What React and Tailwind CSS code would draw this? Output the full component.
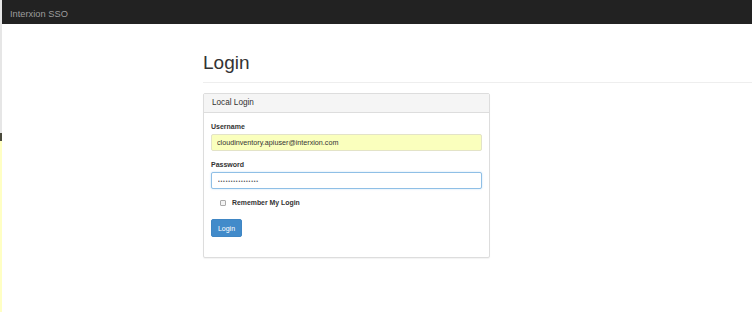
import React from 'react';

const font = { fontFamily: '"Liberation Sans", Arial, sans-serif' };

export default function App() {
  return (
    <div className="flex w-[752px] h-[312px] overflow-hidden bg-white text-[#333]" style={font}>
      {/* left edge artifact strip */}
      <div className="flex flex-col w-[2px] shrink-0">
        <div className="h-[133px] bg-[#e6e6e6]"></div>
        <div className="h-[8px] bg-[#4a4a3c]"></div>
        <div className="flex-1 bg-[#ffffc4]"></div>
      </div>

      <div className="flex flex-col flex-1 min-w-0">
        <nav className="h-[24px] bg-[#222] pl-[8px]">
          <span className="text-[9.3px] leading-[22px] text-[#9d9d9d]">Interxion SSO</span>
        </nav>

        <div className="ml-[201px]">
          <h1 className="mt-[28px] text-[19px] leading-[22px] font-normal text-[#333]">Login</h1>
          <div className="mt-[8px] h-px bg-[#eee]"></div>

          <div className="mt-[10px] w-[287px] border border-[#ddd] rounded-[2px] bg-white shadow-[0_1px_1px_rgba(0,0,0,0.05)]">
            <div className="h-[19px] bg-[#f5f5f5] border-b border-[#ddd] pl-[8px] text-[8.2px] leading-[18px] text-[#333]">
              Local Login
            </div>

            <form className="px-[7px] pt-[9px] pb-[20px]">
              <label className="block text-[7px] leading-[10px] font-bold">Username</label>
              <input
                type="text"
                readOnly
                value="cloudinventory.apiuser@interxion.com"
                className="mt-[2px] block w-full h-[17px] px-[5px] border border-[#e3e3c8] rounded-[2px] bg-[#faffbd] text-[7.2px] text-[#333] outline-none"
                style={font}
              />

              <label className="block mt-[9px] text-[7px] leading-[10px] font-bold">Password</label>
              <input
                type="password"
                readOnly
                value="xxxxxxxxxxxxxxxx"
                className="mt-[2px] block w-full h-[17px] px-[6px] border border-[#8fbfe6] rounded-[2px] bg-white text-[5px] tracking-[0.8px] text-[#555] outline-none shadow-[0_0_2px_rgba(102,175,233,0.4)]"
                style={font}
              />

              <div className="mt-[8px] flex items-center h-[12px] pl-[9px] gap-[6px]">
                <span className="w-[6px] h-[6px] border border-[#aaa] rounded-[1px] bg-[#f3f3f3]"></span>
                <span className="text-[6.9px] font-bold">Remember My Login</span>
              </div>

              <button
                type="button"
                className="mt-[10px] block w-[31px] h-[18px] rounded-[2px] bg-[#428bca] border border-[#3f86c4] text-white text-[7px] leading-none"
                style={font}
              >
                Login
              </button>
            </form>
          </div>
        </div>
      </div>
    </div>
  );
}
